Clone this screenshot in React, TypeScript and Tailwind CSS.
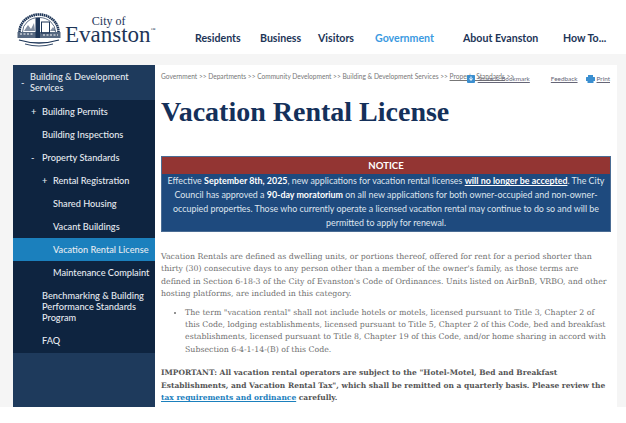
const sans = "font-['Lato','Open_Sans',sans-serif]";
const serif = "font-['DejaVu_Serif',serif]";

function Logo() {
  return (
    <div className="flex items-start">
      <svg width="46" height="34" viewBox="0 0 46 34" className="mr-[3px] shrink-0">
        <path d="M3.500 19 A19.500 17.500 0 0 1 42.500 19" fill="none" stroke="#1d3557" strokeWidth="2.600" strokeDasharray="1.600 0.500" />
        <path d="M6.500 19 A16.500 14.500 0 0 1 39.500 19" fill="none" stroke="#1d3557" strokeWidth="0.700" />
        <path d="M8 18 L12 12 L15 16 L18 10 L19 18 Z" fill="#1d3557" opacity="0.55" />
        <rect x="19.500" y="5" width="4.500" height="20" fill="#1d3557" />
        <rect x="25.500" y="9" width="8" height="11" fill="none" stroke="#1d3557" strokeWidth="1" />
        <path d="M34 18 L37 14 L40 18 Z" fill="#1d3557" opacity="0.55" />
        <rect x="1.500" y="19" width="43" height="6" fill="#1d3557" opacity="0.75" />
        <path d="M4 21 H18 M27 22 H42" stroke="#fff" strokeWidth="1" strokeDasharray="2 1.500" />
        <path d="M3 27 Q23 33 43 27" fill="none" stroke="#1d3557" strokeWidth="1.300" />
        <path d="M9 31 Q23 35 37 31" fill="none" stroke="#1d3557" strokeWidth="0.900" />
      </svg>
      <div className="mt-[3px] flex flex-col items-end font-['Liberation_Serif',serif] text-[#1d3557]">
        <span className="mr-[30px] text-[12px] leading-[11px]">City of</span>
        <span className="text-[23px] leading-[16px]">
          Evanston<span className="align-top text-[5px] leading-none">™</span>
        </span>
      </div>
    </div>
  );
}

function Header() {
  return (
    <header className="flex h-[54px] bg-white">
      <div className="ml-[16px] mt-[13px] w-[178px] shrink-0">
        <Logo />
      </div>
      <nav className={`${sans} mt-[30px] flex items-start text-[10.600px] font-bold leading-[16px] text-[#1d3557]`}>
        <span className="ml-[1px] w-[65px]">Residents</span>
        <span className="w-[58px]">Business</span>
        <span className="w-[57px]">Visitors</span>
        <span className="w-[88px] text-[#3b9ae1]">Government</span>
        <span className="w-[100px]">About Evanston</span>
        <span>How To...</span>
      </nav>
    </header>
  );
}

function NavRow({
  label,
  sign,
  indent = 'pl-[29px]',
  active,
}: {
  label: string;
  sign?: string;
  indent?: string;
  active?: boolean;
}) {
  return (
    <div className={`relative py-[5.800px] ${indent} pr-1 ${active ? 'bg-[#1b80bd]' : ''}`}>
      {sign && <span className="absolute ml-[-11px]">{sign}</span>}
      {label}
    </div>
  );
}

function Sidebar() {
  return (
    <aside className={`${sans} w-[142px] shrink-0 bg-[#1e3a5c] text-[9.200px] font-medium leading-[11.400px] text-[#e6ebf1]`}>
      <div className="relative py-[6px] pl-[17px] pr-2">
        <span className="absolute left-[8px] top-[12px]">-</span>
        Building &amp; Development
        <br />
        Services
      </div>
      <div className="flex flex-col bg-[#0e2440]">
        <NavRow label="Building Permits" sign="+" />
        <NavRow label="Building Inspections" />
        <NavRow label="Property Standards" sign="-" />
        <NavRow label="Rental Registration" sign="+" indent="pl-[40px]" />
        <NavRow label="Shared Housing" indent="pl-[40px]" />
        <NavRow label="Vacant Buildings" indent="pl-[40px]" />
        <NavRow label="Vacation Rental License" indent="pl-[40px]" active />
        <NavRow label="Maintenance Complaint" indent="pl-[40px]" />
        <div className="py-[5.800px] pl-[29px] pr-1">
          Benchmarking &amp; Building
          <br />
          Performance Standards
          <br />
          Program
        </div>
        <NavRow label="FAQ" />
      </div>
    </aside>
  );
}

function Notice() {
  return (
    <div className={`${sans} mt-[28px] border border-[#4a6c94] text-center text-[8.900px] leading-[14px] text-[#dfe5ee]`}>
      <div className="bg-[#933533] py-[1px] text-[9.600px] font-bold leading-[15px] text-white">NOTICE</div>
      <p className="whitespace-nowrap bg-[#1e4a7e] pb-[1px]">
        Effective <b className="text-white">September 8th, 2025</b>, new applications for vacation rental licenses{' '}
        <b className="text-white underline">will no longer be accepted</b>. The City
        <br />
        Council has approved a <b className="text-white">90-day moratorium</b> on all new applications for both
        owner-occupied and non-owner-
        <br />
        occupied properties. Those who currently operate a licensed vacation rental may continue to do so and will be
        <br />
        permitted to apply for renewal.
      </p>
    </div>
  );
}

export default function App() {
  return (
    <div className="h-[423px] w-[626px] overflow-hidden bg-white">
      <Header />
      <div className="h-[353px] bg-[#f5f5f5] pl-[13px] pr-[9px] pt-[11px]">
        <div className="flex h-[342px]">
          <Sidebar />
          <main className="relative flex-1 overflow-hidden bg-white px-[6px] pt-[6px]">
            <div className={`${sans} text-[6.600px] leading-[10px] text-[#777]`}>
              Government &gt;&gt; Departments &gt;&gt; Community Development &gt;&gt; Building &amp; Development Services &gt;&gt;{' '}
              <span className="underline">Property Standards</span> &gt;&gt;
            </div>
            <div className={`${sans} absolute right-[7px] top-[9px] flex items-center text-[6.400px] leading-[10px] text-[#667]`}>
              <svg width="8" height="8" viewBox="0 0 8 8" className="mr-[3px]">
                <rect width="8" height="8" rx="1" fill="#3b8fd0" />
                <path d="M4 1.500V5M2.500 3.500 4 5.500 5.500 3.500" stroke="#fff" fill="none" />
              </svg>
              <span className="mr-[21px] underline">Share &amp; Bookmark</span>
              <span className="mr-[8px] underline">Feedback</span>
              <svg width="9" height="8" viewBox="0 0 9 8" className="mr-[2px]">
                <path d="M2 0h5v2h1.500a.5.5 0 0 1 .5.500V6H7.500v2h-6V6H0V2.500A.5.5 0 0 1 .5 2H2z" fill="#3b8fd0" />
              </svg>
              <span className="underline">Print</span>
            </div>
            <h1 className="mt-[15px] font-['Liberation_Serif',serif] text-[28px] font-bold leading-[32px] text-[#14305a]">
              Vacation Rental License
            </h1>
            <Notice />
            <div className={`${serif} mt-[19px] whitespace-nowrap text-[7.830px] leading-[12.400px] text-[#6f6f6f]`}>
              <p>
                Vacation Rentals are defined as dwelling units, or portions thereof, offered for rent for a period shorter than
                <br />
                thirty (30) consecutive days to any person other than a member of the owner's family, as those terms are
                <br />
                defined in Section 6-18-3 of the City of Evanston's Code of Ordinances. Units listed on AirBnB, VRBO, and other
                <br />
                hosting platforms, are included in this category.
              </p>
              <ul className="mt-[6px] list-disc pl-[24px]">
                <li>
                  The term "vacation rental" shall not include hotels or motels, licensed pursuant to Title 3, Chapter 2 of
                  <br />
                  this Code, lodging establishments, licensed pursuant to Title 5, Chapter 2 of this Code, bed and breakfast
                  <br />
                  establishments, licensed pursuant to Title 8, Chapter 19 of this Code, and/or home sharing in accord with
                  <br />
                  Subsection 6-4-1-14-(B) of this Code.
                </li>
              </ul>
              <p className="mt-[11px] text-[7.500px] font-bold text-[#555]">
                IMPORTANT: All vacation rental operators are subject to the "Hotel-Motel, Bed and Breakfast
                <br />
                Establishments, and Vacation Rental Tax", which shall be remitted on a quarterly basis. Please review the
                <br />
                <span className="text-[#1b80bd] underline">tax requirements and ordinance</span> carefully.
              </p>
            </div>
          </main>
        </div>
      </div>
    </div>
  );
}
